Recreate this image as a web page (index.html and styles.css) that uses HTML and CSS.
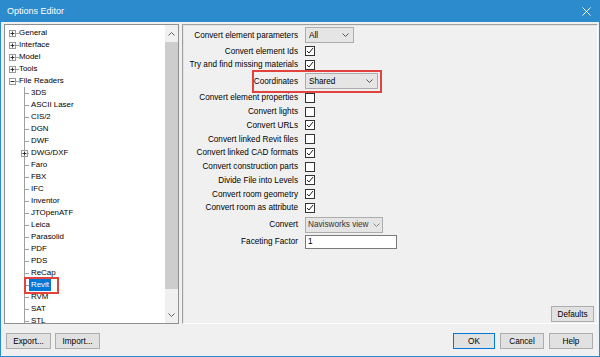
FILE: index.html
```html
<!DOCTYPE html>
<html lang="en">
<head>
    <meta charset="UTF-8">
    <title>Options Editor</title>
    <link rel="stylesheet" href="styles.css">
</head>
<body>
    <div class="window">
        <div class="titlebar">
            <span class="title">Options Editor</span>
            <svg class="close" width="9" height="9" viewBox="0 0 9 9"><path d="M0.5 0.5l8 8M8.5 0.5l-8 8" stroke="#fff" stroke-width="1"/></svg>
        </div>

        <div class="main">
            <div class="tree">
                <div class="tree-list">
                    <div class="node root"><svg class="exp" width="7" height="7" viewBox="0 0 7 7"><rect x="0.5" y="0.5" width="6" height="6" fill="#fff" stroke="#9a9a9a"/><path d="M1.5 3.5h4M3.5 1.5v4" stroke="#333"/></svg><span class="node-text">General</span></div>
                    <div class="node root"><svg class="exp" width="7" height="7" viewBox="0 0 7 7"><rect x="0.5" y="0.5" width="6" height="6" fill="#fff" stroke="#9a9a9a"/><path d="M1.5 3.5h4M3.5 1.5v4" stroke="#333"/></svg><span class="node-text">Interface</span></div>
                    <div class="node root"><svg class="exp" width="7" height="7" viewBox="0 0 7 7"><rect x="0.5" y="0.5" width="6" height="6" fill="#fff" stroke="#9a9a9a"/><path d="M1.5 3.5h4M3.5 1.5v4" stroke="#333"/></svg><span class="node-text">Model</span></div>
                    <div class="node root"><svg class="exp" width="7" height="7" viewBox="0 0 7 7"><rect x="0.5" y="0.5" width="6" height="6" fill="#fff" stroke="#9a9a9a"/><path d="M1.5 3.5h4M3.5 1.5v4" stroke="#333"/></svg><span class="node-text">Tools</span></div>
                    <div class="node root"><svg class="exp" width="7" height="7" viewBox="0 0 7 7"><rect x="0.5" y="0.5" width="6" height="6" fill="#fff" stroke="#9a9a9a"/><path d="M1.5 3.5h4" stroke="#333"/></svg><span class="node-text">File Readers</span></div>

                    <div class="node child">3DS</div>
                    <div class="node child">ASCII Laser</div>
                    <div class="node child">CIS/2</div>
                    <div class="node child">DGN</div>
                    <div class="node child">DWF</div>
                    <div class="node child has-exp"><svg class="exp" width="7" height="7" viewBox="0 0 7 7"><rect x="0.5" y="0.5" width="6" height="6" fill="#fff" stroke="#9a9a9a"/><path d="M1.5 3.5h4M3.5 1.5v4" stroke="#333"/></svg><span class="node-text">DWG/DXF</span></div>
                    <div class="node child">Faro</div>
                    <div class="node child">FBX</div>
                    <div class="node child">IFC</div>
                    <div class="node child">Inventor</div>
                    <div class="node child">JTOpenATF</div>
                    <div class="node child">Leica</div>
                    <div class="node child">Parasolid</div>
                    <div class="node child">PDF</div>
                    <div class="node child">PDS</div>
                    <div class="node child">ReCap</div>
                    <div class="node child"><span class="selected">Revit</span></div>
                    <div class="node child">RVM</div>
                    <div class="node child">SAT</div>
                    <div class="node child">STL</div>
                </div>
                <div class="scrollbar">
                    <div class="sb-btn"><svg width="7" height="4" viewBox="0 0 7 4"><path d="M0.5 3.5l3-3 3 3" fill="none" stroke="#606060"/></svg></div>
                    <div class="sb-track"><div class="sb-thumb"></div></div>
                    <div class="sb-btn"><svg width="7" height="4" viewBox="0 0 7 4"><path d="M0.5 0.5l3 3 3-3" fill="none" stroke="#606060"/></svg></div>
                </div>
            </div>

            <div class="panel">
                <div class="form">
                    <div class="row h18">
                        <span class="label">Convert element parameters</span>
                        <div class="combo w-all"><span>All</span><svg width="7" height="4" viewBox="0 0 7 4"><path d="M0.5 0.5l3 3 3-3" fill="none" stroke="#555"/></svg></div>
                    </div>
                    <div class="row h14">
                        <span class="label">Convert element Ids</span>
                        <span class="check"><svg width="8" height="8" viewBox="0 0 8 8"><path d="M1 4l2 2 4-5" fill="none" stroke="#222"/></svg></span>
                    </div>
                    <div class="row h13">
                        <span class="label">Try and find missing materials</span>
                        <span class="check"><svg width="8" height="8" viewBox="0 0 8 8"><path d="M1 4l2 2 4-5" fill="none" stroke="#222"/></svg></span>
                    </div>
                    <div class="row h20 marked">
                        <span class="label">Coordinates</span>
                        <div class="combo w-shared"><span>Shared</span><svg width="7" height="4" viewBox="0 0 7 4"><path d="M0.5 0.5l3 3 3-3" fill="none" stroke="#555"/></svg></div>
                    </div>
                    <div class="row">
                        <span class="label">Convert element properties</span>
                        <span class="check"></span>
                    </div>
                    <div class="row">
                        <span class="label">Convert lights</span>
                        <span class="check"></span>
                    </div>
                    <div class="row">
                        <span class="label">Convert URLs</span>
                        <span class="check"><svg width="8" height="8" viewBox="0 0 8 8"><path d="M1 4l2 2 4-5" fill="none" stroke="#222"/></svg></span>
                    </div>
                    <div class="row">
                        <span class="label">Convert linked Revit files</span>
                        <span class="check"></span>
                    </div>
                    <div class="row">
                        <span class="label">Convert linked CAD formats</span>
                        <span class="check"><svg width="8" height="8" viewBox="0 0 8 8"><path d="M1 4l2 2 4-5" fill="none" stroke="#222"/></svg></span>
                    </div>
                    <div class="row">
                        <span class="label">Convert construction parts</span>
                        <span class="check"></span>
                    </div>
                    <div class="row">
                        <span class="label">Divide File into Levels</span>
                        <span class="check"><svg width="8" height="8" viewBox="0 0 8 8"><path d="M1 4l2 2 4-5" fill="none" stroke="#222"/></svg></span>
                    </div>
                    <div class="row">
                        <span class="label">Convert room geometry</span>
                        <span class="check"><svg width="8" height="8" viewBox="0 0 8 8"><path d="M1 4l2 2 4-5" fill="none" stroke="#222"/></svg></span>
                    </div>
                    <div class="row">
                        <span class="label">Convert room as attribute</span>
                        <span class="check"><svg width="8" height="8" viewBox="0 0 8 8"><path d="M1 4l2 2 4-5" fill="none" stroke="#222"/></svg></span>
                    </div>
                    <div class="row h20">
                        <span class="label">Convert</span>
                        <div class="combo w-view"><span>Navisworks view</span><svg width="7" height="4" viewBox="0 0 7 4"><path d="M0.5 0.5l3 3 3-3" fill="none" stroke="#888"/></svg></div>
                    </div>
                    <div class="row h14">
                        <span class="label">Faceting Factor</span>
                        <div class="textbox">1</div>
                    </div>
                </div>
                <div class="panel-foot">
                    <button class="btn w-defaults">Defaults</button>
                </div>
            </div>
        </div>

        <div class="footer">
            <div class="btn-group">
                <button class="btn w45">Export...</button>
                <button class="btn w45">Import...</button>
            </div>
            <div class="btn-group wide">
                <button class="btn btn-default w42">OK</button>
                <button class="btn w44">Cancel</button>
                <button class="btn w44">Help</button>
            </div>
        </div>
    </div>
</body>
</html>
```

FILE: styles.css
```css
body {
    margin: 0;
    font-family: "Liberation Sans", Arial, sans-serif;
    background-color: #f0f0f0;
    color: #000;
}

.window {
    width: 600px;
    height: 357px;
    box-sizing: border-box;
    border: 1px solid #2b8bcc;
    border-top: none;
    background-color: #f0f0f0;
}

.titlebar {
    height: 22px;
    margin: 0 -1px;
    background-color: #2b8bcc;
    display: flex;
    align-items: center;
    justify-content: space-between;
    padding: 0 9px 0 7px;
}

.title {
    color: #fff;
    font-size: 9px;
}

/* ---- left tree ---- */
.main {
    height: 300px;
    margin-top: 2px;
    padding: 0 1px 0 3px;
    display: flex;
    gap: 3px;
}

.tree {
    width: 175px;
    box-sizing: border-box;
    border: 1px solid #8f8f8f;
    background-color: #fff;
    display: flex;
}

.tree-list {
    flex: 1;
    overflow: hidden;
    padding-top: 2px;
    font-size: 7.9px;
}

.node {
    height: 12px;
    line-height: 12px;
    display: flex;
    align-items: center;
    white-space: nowrap;
}

.node.root {
    padding-left: 4px;
    background: linear-gradient(#a0a0a0, #a0a0a0) 11px 6px / 3px 1px no-repeat;
}

.node.root .node-text {
    margin-left: 3px;
}

.node.child {
    padding-left: 26px;
    background:
        linear-gradient(#a0a0a0, #a0a0a0) 19px 0 / 1px 100% no-repeat,
        linear-gradient(#a0a0a0, #a0a0a0) 19px 6px / 5px 1px no-repeat;
}

.node.child.has-exp {
    padding-left: 16px;
}

.node.child.has-exp .node-text {
    margin-left: 3px;
}

.selected {
    position: relative;
    margin-left: -2px;
    padding: 0 2px;
    background-color: #0078d7;
    color: #fff;
}

/* red callout drawn over the selection */
.selected::after {
    content: "";
    position: absolute;
    left: -5px;
    right: -8px;
    top: -2px;
    bottom: -3px;
    border: 2px solid #e2433f;
}

.scrollbar {
    width: 13px;
    background-color: #f0f0f0;
    display: flex;
    flex-direction: column;
}

.sb-btn {
    height: 17px;
    display: flex;
    align-items: center;
    justify-content: center;
}

.sb-track {
    flex: 1;
}

.sb-thumb {
    height: 247px;
    background-color: #cdcdcd;
}

/* ---- right panel ---- */
.panel {
    flex: 1;
    box-sizing: border-box;
    border: 1px solid;
    border-color: #a0a0a0 #fff #fff #a0a0a0;
    box-shadow: inset 1px 1px 0 #e3e3e3;
    display: flex;
    flex-direction: column;
    font-size: 8.2px;
}

.form {
    padding-top: 1px;
}

.row {
    height: 13.75px;
    display: flex;
    align-items: center;
    position: relative;
}

.h13 { height: 13px; }
.h14 { height: 14px; }
.h18 { height: 18px; }
.h20 { height: 20px; }

.row.marked::after {
    content: "";
    position: absolute;
    left: 69px;
    top: -1px;
    width: 126px;
    height: 19px;
    border: 2px solid #e2433f;
}

.label {
    width: 115px;
    margin-right: 7px;
    text-align: right;
    white-space: nowrap;
}

.check {
    width: 10px;
    height: 10px;
    box-sizing: border-box;
    border: 1px solid #333;
    background-color: #fff;
    display: flex;
    align-items: center;
    justify-content: center;
}

.combo {
    height: 16px;
    box-sizing: border-box;
    border: 1px solid #acacac;
    background-color: #e5e5e5;
    display: flex;
    align-items: center;
    justify-content: space-between;
    padding: 0 4px 0 3px;
}

.w-all { width: 49px; }
.w-shared { width: 73px; }
.w-view {
    width: 78px;
    padding: 0 2px 0 2px;
    color: #333;
}

.textbox {
    width: 92px;
    height: 14px;
    box-sizing: border-box;
    border: 1px solid #7a7a7a;
    background-color: #fff;
    padding-left: 2px;
    line-height: 12px;
}

.panel-foot {
    margin-top: auto;
    display: flex;
    justify-content: flex-end;
    padding: 0 3px 1px 0;
}

/* ---- buttons ---- */
.btn {
    height: 16px;
    box-sizing: border-box;
    border: 1px solid #adadad;
    background-color: #e1e1e1;
    font-family: inherit;
    font-size: 8.2px;
    color: #000;
    padding: 0;
}

.btn-default {
    border-color: #0078d7;
}

.w-defaults { width: 43px; }
.w42 { width: 42px; }
.w44 { width: 44px; }
.w45 { width: 45px; }

.footer {
    height: 32px;
    box-sizing: border-box;
    padding: 9px 6px 0 5px;
    display: flex;
    justify-content: space-between;
    align-items: flex-start;
}

.btn-group {
    display: flex;
    gap: 4px;
}

.btn-group.wide {
    gap: 5px;
}
```
